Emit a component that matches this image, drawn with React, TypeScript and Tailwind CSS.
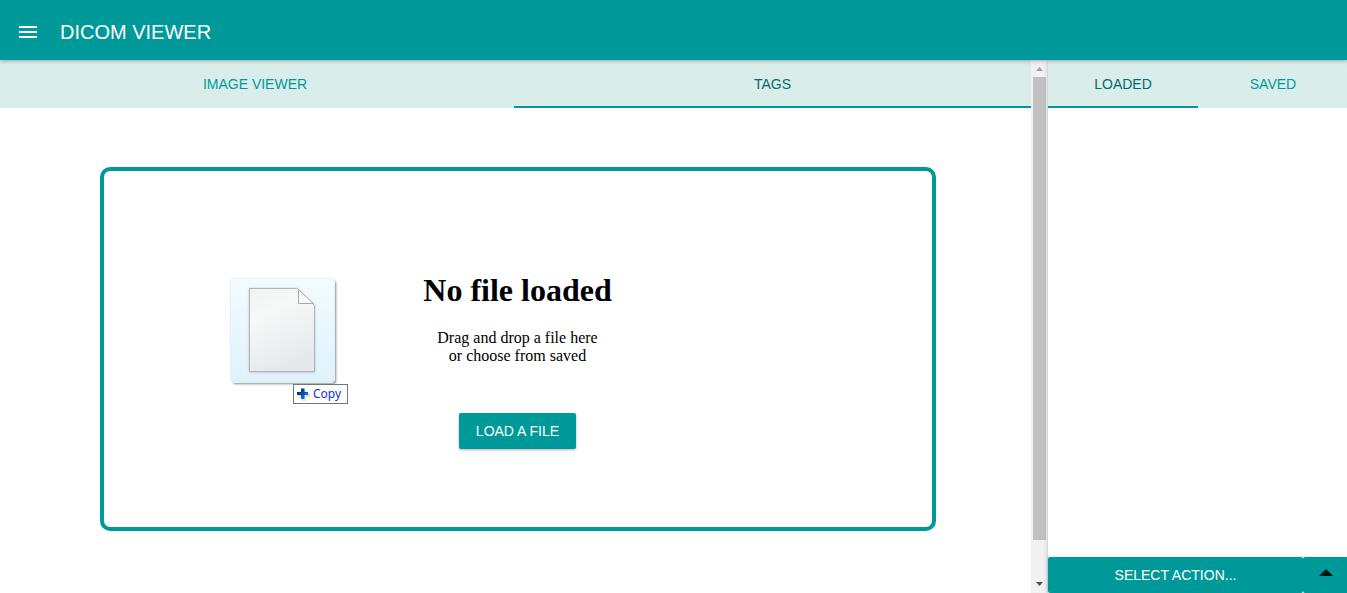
import React from "react";

function Tab({ label, active, className }: { label: string; active?: boolean; className: string }) {
  return (
    <button
      className={`flex h-12 items-center justify-center border-b-2 pt-0.5 text-sm ${
        active ? "border-[#009999] text-[#006b6b]" : "border-transparent text-[#009999]"
      } ${className}`}
    >
      {label}
    </button>
  );
}

function Header() {
  return (
    <header className="relative z-20 flex h-[60px] shrink-0 items-center bg-[#009999] pt-1 pl-[19px] text-white shadow-[0_1px_4px_rgba(0,0,0,0.3)]">
      <svg className="h-3 w-[18px]" viewBox="0 0 18 12" fill="white" shapeRendering="crispEdges">
        <path d="M0 0h18v2H0zM0 5h18v2H0zM0 10h18v2H0z" />
      </svg>
      <h1 className="ml-[23px] text-xl">DICOM VIEWER</h1>
    </header>
  );
}

function DraggedFile() {
  return (
    <div className="absolute top-[106px] left-[126px] h-[130px] w-[124px]">
      <svg width="110" height="110" viewBox="0 0 110 110">
        <defs>
          <linearGradient id="tile" x2="0" y2="1">
            <stop stopColor="#f3fbff" />
            <stop offset="1" stopColor="#e0f2fc" />
          </linearGradient>
          <linearGradient id="paper" x2="0.35" y2="1">
            <stop stopColor="#f1f2f2" />
            <stop offset="0.35" stopColor="#f7f8f8" />
            <stop offset="1" stopColor="#e6e9eb" />
          </linearGradient>
          <filter id="shade" x="-20%" y="-20%" width="140%" height="140%" colorInterpolationFilters="sRGB">
            <feDropShadow dx="2" dy="2" stdDeviation="1.2" floodOpacity="0.45" />
          </filter>
          <filter id="soft" colorInterpolationFilters="sRGB">
            <feDropShadow dx="0" dy="0.5" stdDeviation="1" floodOpacity="0.2" />
          </filter>
        </defs>
        <rect x="1" y="2" width="103" height="103" rx="2.5" fill="url(#tile)" filter="url(#shade)" />
        <rect x="0.5" y="1.5" width="104" height="104" rx="2.5" fill="none" stroke="#d9f3fd" />
        <path d="M19.5 11.5H67.5L84.5 28.5V94.5H19.5Z" fill="url(#paper)" stroke="#b0b4b6" filter="url(#soft)" />
        <path d="M68.5 12.5V26.5H83.5Z" fill="#f8f9f9" stroke="#a8abad" />
      </svg>
      <div className="absolute top-[107px] left-[63px] flex h-5 w-[55px] items-center border border-[#767676] bg-white pl-[3px] font-['Noto_Sans','Open_Sans',sans-serif] text-xs text-[#1030cd]">
        <svg className="mr-[3px] shrink-0" width="13" height="13" viewBox="0 0 13 13">
          <defs>
            <linearGradient id="plus" gradientUnits="userSpaceOnUse" x1="0" y1="0" x2="11" y2="11">
              <stop stopColor="#001f6b" />
              <stop offset="0.5" stopColor="#064c9f" />
              <stop offset="1" stopColor="#18a0f4" />
            </linearGradient>
          </defs>
          <path d="M5 2h4v4h4v3H9v4H5V9H1V6h4z" fill="#e0e0e0" />
          <path d="M4 0.5h3.5V4H11v3H7.5v4H4V7H0V4h4z" fill="url(#plus)" />
        </svg>
        <span>Copy</span>
      </div>
    </div>
  );
}

function DropZone() {
  return (
    <section className="relative mt-[59px] ml-[100px] flex h-[364px] w-[836px] flex-col items-center rounded-[10px] border-4 border-[#009999] pr-px font-['Liberation_Serif',serif] text-black">
      <h2 className="mt-[101px] text-[32px] leading-[37px] font-bold">No file loaded</h2>
      <p className="mt-5 text-center text-base leading-[18px]">
        Drag and drop a file here
        <br />
        or choose from saved
      </p>
      <button className="mt-12 h-9 w-[117px] rounded-[2px] bg-[#009999] font-['Liberation_Sans',sans-serif] text-sm text-white shadow-[0_1px_3px_rgba(0,0,0,0.3)]">
        LOAD A FILE
      </button>
      <DraggedFile />
    </section>
  );
}

function Scrollbar() {
  return (
    <div className="flex w-[17px] shrink-0 flex-col items-center bg-[#f1f1f1]">
      <svg width="17" height="17" viewBox="0 0 17 17">
        <path d="M5 11L8.5 7L12 11Z" fill="#a3a3a3" />
      </svg>
      <div className="h-[463px] w-[13px] bg-[#c1c1c1]" />
      <div className="grow" />
      <svg width="17" height="17" viewBox="0 0 17 17">
        <path d="M5 6L8.5 10L12 6Z" fill="#505050" />
      </svg>
    </div>
  );
}

export default function App() {
  return (
    <div className="flex h-screen flex-col overflow-hidden bg-white font-['Liberation_Sans',Arial,sans-serif]">
      <Header />
      <div className="flex min-h-0 flex-1">
        <main className="min-w-0 flex-1">
          <nav className="flex bg-[#d9edeb]">
            <Tab label="IMAGE VIEWER" className="w-[514px] pr-1" />
            <Tab label="TAGS" active className="flex-1" />
          </nav>
          <DropZone />
        </main>
        <Scrollbar />
        <aside className="z-10 flex w-[299px] shrink-0 flex-col bg-white shadow-[0_0_4px_rgba(0,0,0,0.25)]">
          <nav className="flex bg-[#d9edeb]">
            <Tab label="LOADED" active className="w-[150px]" />
            <Tab label="SAVED" className="flex-1 pl-px" />
          </nav>
          <div className="grow" />
          <div className="flex h-9 text-sm text-white shadow-[0_0_3px_rgba(0,0,0,0.2)]">
            <button className="w-[255px] rounded-[2px] bg-[#009999]">SELECT ACTION...</button>
            <button className="flex flex-1 items-center justify-center rounded-l-[2px] bg-[#009999] pb-[5px] pl-0.5">
              <svg width="14" height="7" viewBox="0 0 14 7">
                <path d="M0 7L7 0L14 7Z" fill="#001414" />
              </svg>
            </button>
          </div>
        </aside>
      </div>
    </div>
  );
}
